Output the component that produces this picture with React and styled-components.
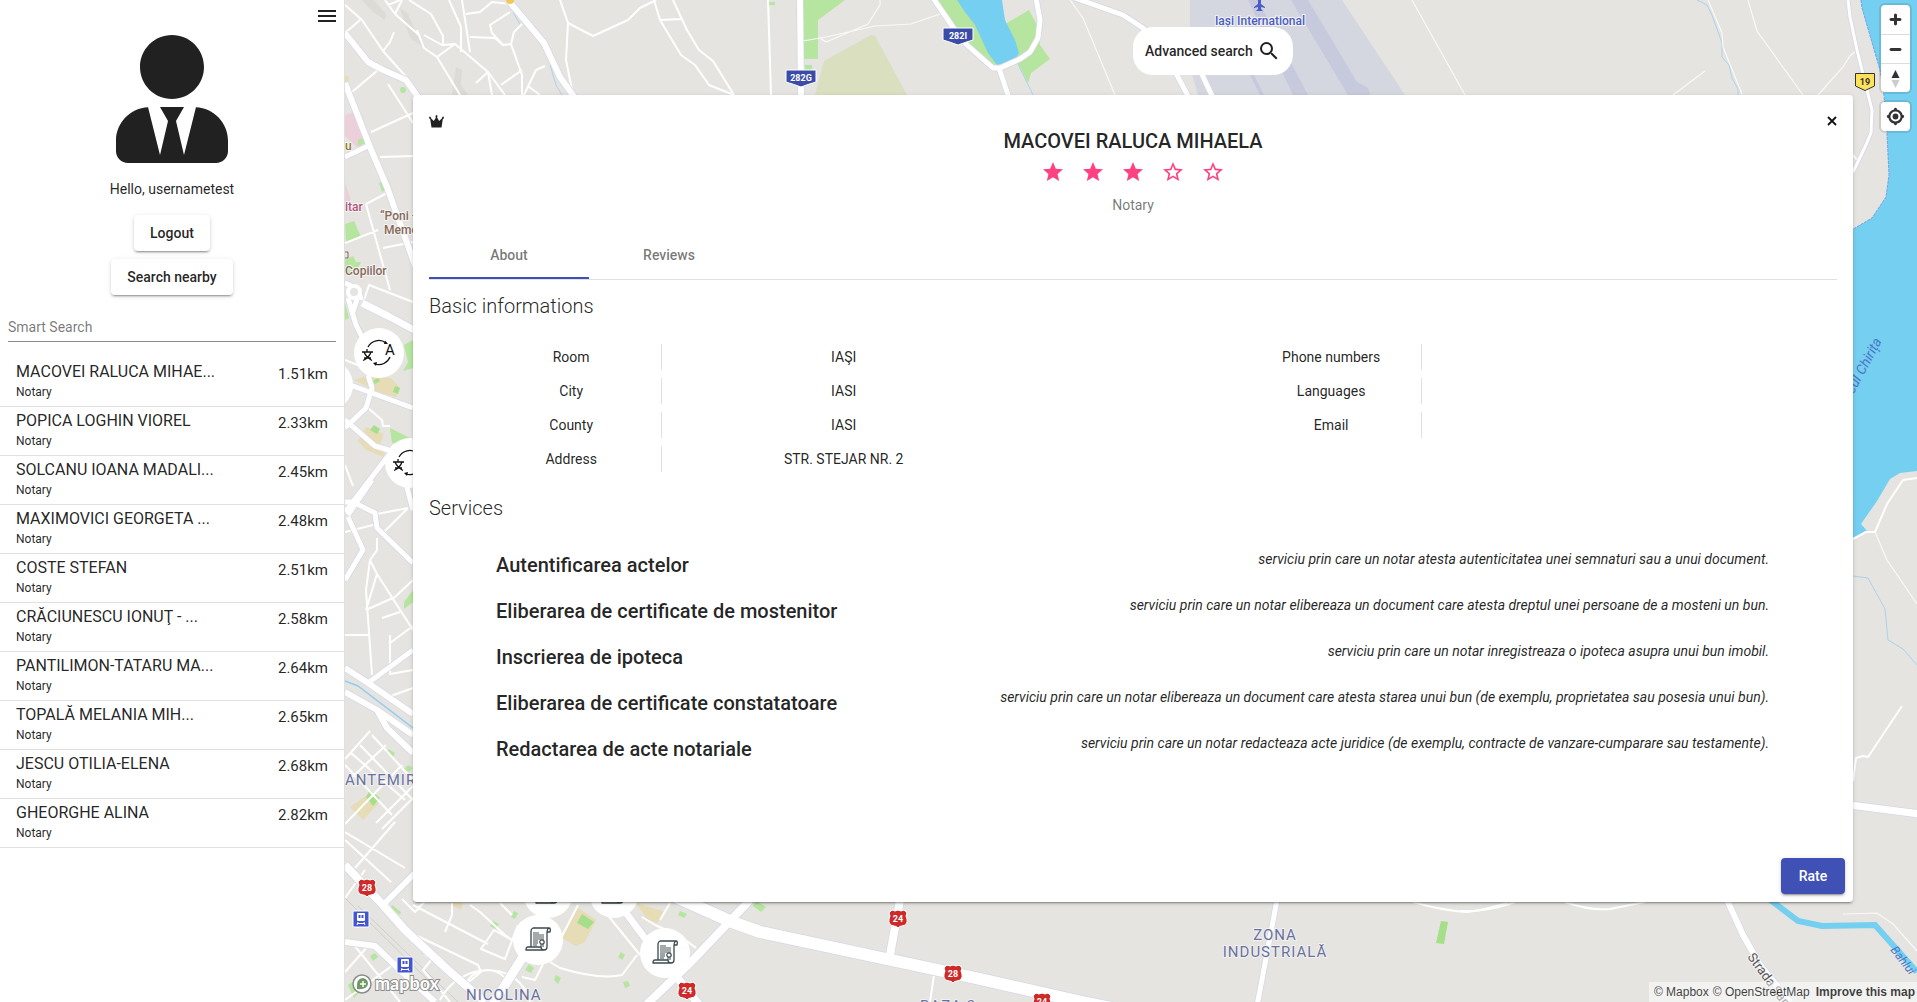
import React, { useState } from "react";
import styled, { createGlobalStyle, css } from "styled-components";
import { FaUserTie } from "react-icons/fa";
import { MdMenu, MdSearch, MdStar, MdStarBorder } from "react-icons/md";

const GlobalStyle = createGlobalStyle`
  *, *::before, *::after { box-sizing: border-box; }
  body {
    margin: 0;
    background: #fff;
    color: rgba(0, 0, 0, 0.87);
    font-family: Roboto, "Liberation Sans", sans-serif;
    font-size: 14px;
    line-height: 20px;
  }
  button, input { font: inherit; color: inherit; }
  h1, h2, h3, p, dl, dd, ul { margin: 0; padding: 0; }
`;

/* ---------- shell ---------- */

const Shell = styled.div`
  display: grid;
  grid-template-columns: 345px minmax(0, 1fr);
  height: 100vh;
  overflow: hidden;
`;

const Sidebar = styled.aside`
  display: flex;
  flex-direction: column;
  align-items: center;
  overflow: hidden;
  border-right: 1px solid #e0e0e0;
`;

const IconButton = styled.button`
  display: flex;
  align-items: center;
  justify-content: center;
  width: ${(p) => p.$width || 24}px;
  height: 24px;
  padding: 0;
  border: 0;
  background: none;
  color: ${(p) => p.$color || "inherit"};
  font-size: 24px;
  cursor: pointer;
`;

const SidebarTop = styled.div`
  align-self: stretch;
  display: flex;
  justify-content: flex-end;
  padding: 4px 5px 7px;
`;

const Avatar = styled(FaUserTie)`
  font-size: 128px;
  width: 112px;
  height: 128px;
  flex: none;
`;

const Greeting = styled.p`
  margin: 16px 0;
`;

const raised = css`
  box-shadow: 0 3px 1px -2px rgba(0, 0, 0, 0.2), 0 2px 2px 0 rgba(0, 0, 0, 0.14),
    0 1px 5px 0 rgba(0, 0, 0, 0.12);
`;

const Button = styled.button`
  min-width: 64px;
  height: 36px;
  padding: 0 16px;
  border: 0;
  border-radius: 4px;
  background: ${(p) => (p.$primary ? "#3f51b5" : "#fff")};
  color: ${(p) => (p.$primary ? "#fff" : "inherit")};
  font-weight: 500;
  cursor: pointer;
  ${raised}
`;

const ButtonStack = styled.div`
  display: flex;
  flex-direction: column;
  align-items: center;
  gap: 8px;
`;

const SearchField = styled.label`
  align-self: stretch;
  display: block;
  margin: 22px 8px 16px;
  border-bottom: 1px solid #8c8c8c;
`;

const SearchInput = styled.input`
  display: block;
  width: 100%;
  height: 24px;
  padding: 0 0 4px;
  border: 0;
  outline: 0;
  background: none;
  &::placeholder { color: rgba(0, 0, 0, 0.54); opacity: 1; }
`;

const ResultList = styled.ul`
  align-self: stretch;
  list-style: none;
`;

const ResultRow = styled.li`
  display: flex;
  justify-content: space-between;
  padding: 2px 16px 6px;
  border-bottom: 1px solid #e0e0e0;
`;

const ResultName = styled.div`
  font-size: 16px;
  line-height: 24px;
`;

const ResultKind = styled.div`
  font-size: 12px;
  line-height: 16px;
`;

const Distance = styled.div`
  font-size: 15px;
  line-height: 28px;
`;

/* ---------- map ---------- */

const MapArea = styled.main`
  position: relative;
  overflow: hidden;
  background: #e5e4e0;
`;

const MapCanvas = styled.svg`
  position: absolute;
  inset: 0;
  width: 100%;
  height: 100%;
  font-family: Roboto, sans-serif;
`;

const Stage = styled.div`
  position: relative;
  display: flex;
  flex-direction: column;
  height: 100vh;
  padding: 27px 64px 100px 68px;
`;

const AdvancedSearch = styled.button`
  align-self: flex-start;
  margin-left: 50%;
  display: flex;
  align-items: center;
  gap: 4px;
  height: 48px;
  padding: 0 12px;
  border: 0;
  border-radius: 20px;
  background: #fff;
  font-weight: 500;
  cursor: pointer;
  svg { font-size: 24px; }
`;

const Controls = styled.div`
  position: absolute;
  top: 5px;
  right: 7px;
  display: flex;
  flex-direction: column;
  gap: 10px;
`;

const ControlGroup = styled.div`
  border-radius: 4px;
  background: #fff;
  overflow: hidden;
  box-shadow: 0 0 0 2px rgba(0, 0, 0, 0.1);
`;

const ControlButton = styled.button`
  display: block;
  width: 29px;
  height: 29px;
  padding: 0;
  border: 0;
  background: none;
  cursor: pointer;
  & + & { border-top: 1px solid #ddd; }
  svg { display: block; width: 29px; height: 29px; }
`;

const Attribution = styled.div`
  position: absolute;
  right: 0;
  bottom: 0;
  display: flex;
  gap: 4px;
  padding: 0 2px 0 5px;
  background: rgba(255, 255, 255, 0.5);
  font-family: "Liberation Sans", Arial, sans-serif;
  font-size: 12px;
  white-space: nowrap;
  a { color: rgba(0, 0, 0, 0.75); text-decoration: none; }
  a:last-child { font-weight: 700; margin-left: 2px; }
`;

/* ---------- panel ---------- */

const Panel = styled.section`
  flex: 1;
  display: flex;
  flex-direction: column;
  margin-top: 20px;
  border-radius: 4px;
  background: #fff;
  ${raised}
`;

const PanelHeader = styled.header`
  display: grid;
  grid-template-columns: 24px 1fr 24px;
  padding: 14px 16px 16px;
`;

const HeaderCenter = styled.div`
  display: flex;
  flex-direction: column;
  align-items: center;
  padding-top: 16px;
`;

const Title = styled.h1`
  font-size: 20px;
  font-weight: 500;
  line-height: 32px;
`;

const Stars = styled.div`
  display: flex;
  padding: 3px 0 11px;
`;

const Subtitle = styled.p`
  color: rgba(0, 0, 0, 0.54);
`;

const TabBar = styled.div`
  display: flex;
  margin: 0 16px;
  border-bottom: 1px solid #e0e0e0;
`;

const Tab = styled.button`
  width: 160px;
  height: 48px;
  padding: 2px 0 0;
  border: 0;
  border-bottom: 2px solid ${(p) => (p.$active ? "#3f51b5" : "transparent")};
  background: none;
  color: rgba(0, 0, 0, 0.54);
  font-weight: 500;
  cursor: pointer;
`;

const PanelBody = styled.div`
  padding: 10px 16px 0;
`;

const SectionTitle = styled.h2`
  font-size: 20px;
  font-weight: 300;
  line-height: 32px;
`;

const FactColumns = styled.div`
  display: grid;
  grid-template-columns: 1fr 1fr;
  column-gap: 216px;
  padding: 22px 52px 20px;
`;

const FactList = styled.dl`
  display: flex;
  flex-direction: column;
  gap: 8px;
`;

const Fact = styled.div`
  display: grid;
  grid-template-columns: 1fr 2fr;
  line-height: 26px;
  text-align: center;
  dt { border-right: 1px solid #e0e0e0; }
`;

const ServiceList = styled.div`
  display: flex;
  flex-direction: column;
  gap: 14px;
  padding: 25px 68px 24px 67px;
`;

const Service = styled.div`
  display: flex;
  justify-content: space-between;
  align-items: flex-start;
  h3 { font-size: 20px; font-weight: 500; line-height: 32px; }
  p { font-style: italic; text-align: right; }
`;

const PanelFooter = styled.footer`
  display: flex;
  justify-content: flex-end;
  margin-top: auto;
  padding: 8px;
`;

/* ---------- data ---------- */

const results = [
  ["MACOVEI RALUCA MIHAE...", "1.51km"],
  ["POPICA LOGHIN VIOREL", "2.33km"],
  ["SOLCANU IOANA MADALI...", "2.45km"],
  ["MAXIMOVICI GEORGETA ...", "2.48km"],
  ["COSTE STEFAN", "2.51km"],
  ["CRĂCIUNESCU IONUŢ - ...", "2.58km"],
  ["PANTILIMON-TATARU MA...", "2.64km"],
  ["TOPALĂ MELANIA MIH...", "2.65km"],
  ["JESCU OTILIA-ELENA", "2.68km"],
  ["GHEORGHE ALINA", "2.82km"],
];

const facts = [
  [["Room", "IAŞI"], ["City", "IASI"], ["County", "IASI"], ["Address", "STR. STEJAR NR. 2"]],
  [["Phone numbers", ""], ["Languages", ""], ["Email", ""]],
];

const services = [
  ["Autentificarea actelor", "serviciu prin care un notar atesta autenticitatea unei semnaturi sau a unui document."],
  ["Eliberarea de certificate de mostenitor", "serviciu prin care un notar elibereaza un document care atesta dreptul unei persoane de a mosteni un bun."],
  ["Inscrierea de ipoteca", "serviciu prin care un notar inregistreaza o ipoteca asupra unui bun imobil."],
  ["Eliberarea de certificate constatatoare", "serviciu prin care un notar elibereaza un document care atesta starea unui bun (de exemplu, proprietatea sau posesia unui bun)."],
  ["Redactarea de acte notariale", "serviciu prin care un notar redacteaza acte juridice (de exemplu, contracte de vanzare-cumparare sau testamente)."],
];

/* Map features: polygons as [fill, points], roads as [width, points]. */
const areas = [
  ["#b5e59f", "801,0 845,0 818,20 818,59 803,59"],
  ["#b5e59f", "805,65 812,65 812,70 805,70"],
  ["#b5e59f", "769,2 775,2 775,5 769,5"],
  ["#d9dfbf", "815,95 824,61 871,35 875,36 907,95"],
  ["#b5e59f", "936,0 962,0 975,25 997,65 988,64 960,35"],
  ["#b5e59f", "1007,23 1029,10 1038,27 1040,45 1050,59 1031,73 1028,83 1018,63 1010,60"],
  ["#75cff0", "957,0 1002,0 1005,20 1015,40 1019,53 1013,62 997,65 988,53 975,25 965,12"],
  ["#d5d7e0", "1190,0 1342,0 1405,95 1198,95 1190,67"],
  ["#c7c9dd", "1291,0 1308,0 1357,82 1368,88 1370,95 1348,95"],
  ["#c7c9dd", "1248,0 1258,0 1308,95 1293,95"],
  ["#c7c9dd", "1250,75 1254,75 1264,95 1260,95"],
  ["#75cff0", "1861,0 1862,8 1880,70 1884,95 1887,133 1889,175 1886,197 1872,218 1850,231 1840,545 1867,531 1861,524 1877,501 1890,479 1900,473 1917,471 1917,0"],
  ["#dcdbd6", "362,0 374,0 386,14 385,20 373,12"],
  ["#dcdbd6", "400,8 408,14 422,46 410,38"],
  ["#dcdbd6", "456,67 462,70 461,85 468,95 452,95"],
  ["#ebd0da", "345,115 354,112 366,140 358,148 345,136"],
  ["#ebd0da", "345,182 351,200 345,203"],
  ["#b5e59f", "358,140 364,138 366,143 358,146"],
  ["#b5e59f", "345,224 354,221 361,237 346,243"],
  ["#b5e59f", "379,183 384,181 387,189 382,192"],
  ["#b5e59f", "345,260 353,256 356,262 361,262 357,270 345,275"],
  ["#b5e59f", "345,303 349,318 345,320"],
  ["#b5e59f", "404,345 413,340 413,368 403,371 408,362"],
  ["#e6dcb5", "345,75 349,77 348,82 345,82"],
  ["#e6dcb5", "354,380 366,376 391,378 400,388 396,397 378,392"],
  ["#a5df8a", "373,381 378,378 380,381 375,384"],
  ["#a5df8a", "395,386 400,388 398,394 393,392"],
  ["#e6dcb5", "358,441 366,427 384,434 380,444 386,458 366,450"],
  ["#a5df8a", "374,425 380,429 377,434 370,430"],
  ["#b5e59f", "390,428 410,438 410,443 392,443"],
  ["#b5e59f", "413,590 404,602 404,609 413,602"],
  ["#b5e59f", "388,749 395,753 393,757 386,753"],
  ["#b5e59f", "408,765 413,768 409,772 404,769"],
  ["#e6dcb5", "350,807 370,793 380,802 363,820"],
  ["#a5df8a", "370,790 380,798 373,806 366,797"],
  ["#b5e59f", "392,905 401,912 400,915 391,908"],
  ["#e6dcb5", "448,903 463,903 461,910"],
  ["#b5e59f", "375,953 378,957 373,961 370,956"],
  ["#b5e59f", "348,985 355,980 361,990 354,998"],
  ["#b5e59f", "493,921 499,924 496,929 490,926"],
  ["#b5e59f", "514,911 518,913 515,919 511,917"],
  ["#e6dcb5", "578,908 596,920 585,942 576,946 562,938"],
  ["#a5df8a", "582,914 594,922 588,929 577,923"],
  ["#e6dcb5", "636,903 665,912 657,923 647,919"],
  ["#b5e59f", "680,911 687,914 684,918 678,915"],
  ["#b5e59f", "756,901 766,907 761,912 753,906"],
  ["#b5e59f", "529,964 534,968 531,973 525,970"],
  ["#b5e59f", "556,975 561,978 558,984 554,980"],
  ["#b5e59f", "621,952 625,955 622,960 618,957"],
  ["#b5e59f", "623,982 628,981 630,986 625,988"],
  ["#a5df8a", "1441,921 1448,922 1444,944 1436,943"],
];

const streams = [
  [1, "M1697 0L1707 5L1712 15L1722 43V57L1729 65L1732 78L1738 89V95"],
  [1, "M1853 576L1868 578L1885 609L1888 640L1903 649L1917 665"],
  [1, "M1016 60L1033 95"],
  [1, "M513 12L521 26M550 65L556 85L562 95"],
];

const lanes =
  "M345 5L362 20L383 51L408 79M383 51L390 42L394 32M345 33L360 20M385 0L395 14L420 36M395 14L402 0" +
  "M417 30L424 48L437 57L460 95M388 5L400 0M437 57L455 44L442 45L424 35M409 0L431 14L443 36V45L455 44" +
  "M462 0L470 52M455 44L488 72L505 95M437 57L455 44M449 0L461 27V52M470 37L495 38L503 45L511 44L522 75V95" +
  "M466 14L480 12L492 2L510 4M510 12L490 25L492 33L503 45M511 44L514 32L522 24M501 85L522 70M524 95L536 70L545 66" +
  "M528 86L540 95M476 83L488 72L492 95M388 84L413 123M371 132L413 113M380 157L413 156M366 204L387 193" +
  "M366 204L390 290M383 248L413 242M345 243L378 230M352 92L378 70M364 300L369 285L413 302M372 330L380 345" +
  "M560 0L568 23L566 60L573 95M568 23L593 36L628 20L640 8L656 0M654 0L660 20L681 55L695 65L709 85L734 95" +
  "M673 0L687 30L699 50L713 61L734 95M660 20L682 19M768 0L771 95" +
  "M345 360L360 366M368 408L382 420L383 426L390 426M345 465L353 486M377 514L408 508M408 508L383 533M345 532L377 524" +
  "M377 538V550L370 560L366 590L372 675M366 610L377 574L370 560M377 574L413 630M366 610L395 597L413 580M345 635H368" +
  "M390 635V674L413 670M390 643L413 626M382 618L400 612M391 696L413 688" +
  "M345 759L370 731M345 784L386 745M345 765L392 815M350 752L405 800M360 745L413 800M372 735L413 780M345 824L402 765" +
  "M376 823L413 786M382 829L413 798M345 832L405 868M355 868L395 822M345 840L391 882" +
  "M345 898L365 870M413 870L435 888M402 899L415 912L425 901M413 905L488 944M452 903V915L445 932" +
  "M470 905L480 912L505 935L512 940L494 930L481 949L505 959L518 925M500 903L512 915M345 972L368 946M350 940L400 1002" +
  "M345 1000L400 960M425 955L432 959L423 970L450 1002M405 930L478 965L481 972L465 985M465 985C475 965 500 965 510 985" +
  "M440 1000C460 960 520 960 530 1002M550 962L560 968Q600 980 622 975L637 955M606 913L640 955" +
  "M544 962L535 980L522 977M560 940L578 905M642 917L655 925Q680 935 696 948M660 920L670 903M934 975L930 1002" +
  "M1413 902Q1440 910 1466 912Q1480 911 1507 903M1460 911L1475 911Q1500 908 1515 902M1565 902Q1590 911 1610 909L1645 902" +
  "M1853 781L1856 758L1863 756L1868 757L1902 706M1853 539L1866 532L1875 532L1887 504L1903 480L1917 478M1853 155L1857 160";

const hairlines =
  "M803 41L826 37L875 26L911 24L940 14M732 0M1070 0L1083 18L1115 95M1412 0L1465 95M1708 0L1722 33L1723 47L1742 94" +
  "M1748 0L1757 31L1803 95M1673 95L1705 71M1818 95L1843 67L1850 56L1857 50M868 24L880 5V0M820 38L826 42L868 24" +
  "M1843 914L1877 913L1893 924L1917 951M1875 532L1887 560L1917 604";

const roads = [
  [6, "M345 33L368 62L383 70L406 80L418 97"],
  [6, "M345 83L370 147L387 187L416 268"],
  [5, "M345 157L370 145"],
  [5, "M345 283Q360 288 361 300M348 298L356 325L366 345M358 296L353 312"],
  [7, "M362 303L388 316L416 331"],
  [5, "M345 383L413 408"],
  [5, "M368 375L372 388L366 408L345 428"],
  [5, "M345 420L375 446L395 452"],
  [5, "M388 456L345 512"],
  [5, "M405 480L413 510"],
  [5, "M348 515L372 480"],
  [5, "M345 502H353L375 513L377 528L413 563"],
  [5, "M348 517L363 550L345 580"],
  [6, "M345 668L368 683L413 714"],
  [5, "M368 683L413 650"],
  [6, "M345 692L377 710L387 728L413 753M377 710L413 735"],
  [8, "M345 865L383 905L405 930L448 970L485 1002"],
  [6, "M383 905L416 872"],
  [6, "M345 942L375 946L400 970L435 1002"],
  [9, "M524 955L492 1006"],
  [7, "M620 905L650 945"],
  [8, "M675 975L700 1006"],
  [8, "M750 900L691 962L645 1006"],
  [12, "M665 892L732 922L760 932L891 960L980 979L1082 1002L1131 1012"],
  [8, "M900 900L890 955"],
  [5, "M1277 900L1257 1006"],
  [6, "M508 0L544 43L560 77L575 98"],
  [6, "M800 -2L801 95"],
  [5, "M933 -2L955 30L967 45L993 68H1000L1020 59L1030 52L1038 38L1040 20L1036 -2M999 68L1009 98"],
  [5, "M1075 -2L1123 15L1143 28L1177 75L1189 98M1200 70L1213 98"],
  [3, "M1848 0L1850 17L1857 50L1862 70L1872 110L1871 133L1865 147L1853 172"],
  [7, "M1850 805L1920 814"],
  [6, "M1727 900L1743 935L1760 965L1790 1002"],
];

const shields = [
  ["28", 367, 888],
  ["24", 898, 919],
  ["28", 953, 974],
  ["24", 687, 991],
  ["24", 1042, 1002],
];

/* ---------- map drawing ---------- */

const RedShield = ({ x, y, label }) => (
  <g transform={`translate(${x} ${y})`}>
    <path
      d="M-6 -9Q-3 -7 0 -9Q3 -7 6 -9L9 -6Q7 -3 9 0Q10 6 4 7Q1 7 0 9Q-1 7 -4 7Q-10 6 -9 0Q-7 -3 -9 -6Z"
      fill="#cf2a2a" stroke="#fff" strokeWidth="1"
    />
    <text y="3" textAnchor="middle" fontSize="9" fontWeight="700" fill="#fff">{label}</text>
  </g>
);

const BlueShield = ({ x, y, label }) => (
  <g transform={`translate(${x} ${y})`}>
    <path d="M-15 -8H15V4Q8 6 0 9Q-8 6 -15 4Z" fill="#3b4ca8" stroke="#fff" />
    <text y="3" textAnchor="middle" fontSize="9" fontWeight="700" fill="#fff">{label}</text>
  </g>
);

const Station = ({ x, y }) => (
  <g transform={`translate(${x} ${y})`}>
    <rect x="-8" y="-8" width="16" height="16" rx="1" fill="#4257cd" stroke="#fff" />
    <rect x="-4" y="-6" width="8" height="8" rx="1" fill="#fff" />
    <path d="M-2.5 -4H-.5V-1H-2.5ZM.5 -4H2.5V-1H.5Z" fill="#4257cd" />
    <path d="M-3 3L-4 6M3 3L4 6M-3 4.500H3" stroke="#fff" />
  </g>
);

const TranslatorPin = ({ x, y }) => (
  <g transform={`translate(${x} ${y})`}>
    <circle r="25" fill="#fff" />
    <path d="M-11 -6A12 12 0 0 1 7 -10" fill="none" stroke="#111" strokeWidth="1.300" />
    <path d="M6 -12.500L9 -9L5 -9Z" fill="#111" />
    <path d="M11 4A12 12 0 0 1 -4 11" fill="none" stroke="#111" strokeWidth="1.300" />
    <path d="M-2 9L-6 10L-3 13Z" fill="#111" />
    <path d="M-17 -1H-6M-12 -4V-1M-15 -1Q-13 4 -7 7.500M-8 -1Q-10 5 -16 7.500M-15 5H-8" fill="none" stroke="#111" strokeWidth="1.300" />
    <text x="11" y="2" textAnchor="middle" fontSize="15" fill="#111">A</text>
  </g>
);

const NotaryPin = ({ x, y }) => (
  <g transform={`translate(${x} ${y})`}>
    <circle r="25" fill="#fff" />
    <g fill="none" stroke="#3b4a4c" strokeWidth="1.300" strokeLinejoin="round">
      <path d="M-7 7V-9Q-7 -11 -5 -12H11Q13 -12 12 -8H9Q9 -11 11 -12M9 -8V7Q9 10 6 10H-12Q-12 7 -10 7H3Q3 10 6 10" />
    </g>
    <path d="M-5 -7H1M-5 -5H6M-5 -3H6M-5 -1H6" stroke="#888f90" strokeWidth="1.300" />
    <path d="M-5 1H0M-5 3H0M-5 5H-1" stroke="#3b4a4c" />
    <circle cx="4" cy="2" r="2.200" fill="#fff" stroke="#3b4a4c" strokeWidth="1.200" />
    <path d="M3 4V7M5 4V7" stroke="#3b4a4c" />
  </g>
);

const district = {
  fill: "#6a71a0",
  stroke: "#f2f1f0",
  strokeWidth: 2,
  paintOrder: "stroke",
  fontSize: 15,
  letterSpacing: 1,
};

const halo = { stroke: "#f4f3f1", strokeWidth: 2, paintOrder: "stroke" };

function CityMap() {
  return (
    <MapCanvas viewBox="345 0 1572 1002" preserveAspectRatio="xMinYMin slice" aria-hidden="true">
      {areas.map(([fill, points]) => (
        <polygon key={points} points={points} fill={fill} />
      ))}
      <path
        d="M1861 0L1862 8L1880 70L1884 95L1887 133L1889 175L1886 197L1872 218L1850 231"
        fill="none" stroke="#6aa5ee" strokeDasharray="3 1"
      />
      {streams.map(([w, d]) => (
        <path key={d} d={d} fill="none" stroke="#a9d3ee" strokeWidth={w} />
      ))}
      <path d="M345 681L358 686L413 728" fill="none" stroke="#8fcdf3" strokeWidth="1.500" />
      <path d="M1768 898L1798 921L1822 926L1875 925L1917 972" fill="none" stroke="#75cff0" strokeWidth="6" />
      <path d="M345 898L450 1002M358 906L458 1002" fill="none" stroke="#cfcec9" />
      <path d={lanes} fill="none" stroke="#fff" strokeWidth="2" strokeLinejoin="round" />
      <path d={hairlines} fill="none" stroke="#f9f9f7" strokeWidth="1.200" />
      {roads.map(([w, d]) => (
        <path key={d} d={d} fill="none" stroke="#d6d7e8" strokeWidth={w + 1.5} strokeLinejoin="round" />
      ))}
      {roads.map(([w, d]) => (
        <path key={d} d={d} fill="none" stroke="#fff" strokeWidth={w} strokeLinejoin="round" />
      ))}
      <circle cx="354" cy="292" r="6" fill="#e5e4e0" stroke="#fff" strokeWidth="4" />
      <circle cx="403" cy="90" r="3" fill="#b5e59f" />
      <circle cx="510" cy="0" r="4" fill="#f3c955" />

      <g fontSize="12" fontWeight="500" {...halo}>
        <text x="345" y="150" fill="#8f7a35">u</text>
        <text x="345" y="211" fill="#b0557c">itar</text>
        <text x="380" y="220" fill="#856a5c">“Poni -</text>
        <text x="384" y="234" fill="#856a5c">Memo</text>
        <text x="345" y="275" fill="#856a5c">Copiilor</text>
        <text x="1260" y="25" textAnchor="middle" fill="#4a5cc5">Iași International</text>
      </g>
      <path d="M345 252H348V258H345" fill="none" stroke="#856a5c" />
      <path d="M1259 -2L1261 0V4L1265 7V8L1261 7V9L1263 11H1256L1258 9V7L1254 8V7L1258 4V0Z" fill="#4a5cc5" />

      <text x="345" y="785" {...district}>ANTEMIR</text>
      <text x="466" y="1000" {...district}>NICOLINA</text>
      <text x="1275" y="940" textAnchor="middle" {...district}>ZONA</text>
      <text x="1275" y="957" textAnchor="middle" {...district}>INDUSTRIALĂ</text>
      <text x="920" y="1011" {...district}>BAZA 3</text>

      <text transform="translate(1882 341) rotate(-62)" textAnchor="end" fontSize="14" fontStyle="italic" fill="#4a78c8">Lacul Chirița</text>
      <text transform="translate(1890 950) rotate(52)" fontSize="12" fontStyle="italic" fill="#4a78c8">Bahlui</text>
      <text transform="translate(1747 957) rotate(54)" fontSize="13" fill="#555" {...halo}>Strada San</text>

      <BlueShield x={801} y={78} label="282G" />
      <BlueShield x={958} y={36} label="282I" />
      <path d="M1855.500 73.500H1874.500V86L1865 90.500L1855.500 86Z" fill="#fde25a" stroke="#333" />
      <text x="1865" y="85" textAnchor="middle" fontSize="9" fontWeight="700" fill="#333">19</text>
      {shields.map(([label, x, y]) => (
        <RedShield key={label + x} label={label} x={x} y={y} />
      ))}
      <Station x={361} y={919} />
      <Station x={405} y={965} />

      <circle cx="328" cy="385" r="25" fill="#fff" />
      <TranslatorPin x={379} y={353} />
      <TranslatorPin x={410} y={463} />
      <NotaryPin x={548} y={893} />
      <NotaryPin x={614} y={893} />
      <NotaryPin x={538} y={940} />
      <NotaryPin x={665} y={953} />

      <circle cx="362" cy="984" r="9" fill="#fff" fillOpacity="0.900" stroke="#8c8c8c" strokeWidth="1.500" />
      <path d="M357 989Q356 978 363 978Q368 979 368 984Q367 990 357 989Z" fill="#6f9a67" />
      <path d="M363 981V987M360 984H366" stroke="#fff" strokeWidth="1.500" />
      <text x="375" y="990" fontFamily="Lato, sans-serif" fontSize="18" fontWeight="700" fill="#fff" stroke="#8c8c8c" strokeWidth="2" paintOrder="stroke">mapbox</text>
    </MapCanvas>
  );
}

/* ---------- icons ---------- */

const CrownIcon = () => (
  <svg width="15" height="13" viewBox="0 0 15 13" aria-hidden="true">
    <path
      d="M2.500 12.500L1.200 4L0 3.200L.4 1.600L1.800 2L2 3.300L4.800 6L6.800 2.800L6.500 .8L7.500 0L8.500 .8L8.200 2.800L10.200 6L13 3.300L13.200 2L14.600 1.600L15 3.200L13.800 4L12.500 12.500Z"
      fill="currentColor"
    />
  </svg>
);

const CloseIcon = () => (
  <svg width="10" height="10" viewBox="0 0 10 10" aria-hidden="true">
    <path d="M1 1L9 9M9 1L1 9" stroke="#111" strokeWidth="1.800" />
  </svg>
);

const HeaderCorner = styled.div`
  display: flex;
  justify-content: ${(p) => p.$side};
  svg { flex: none; }
  button { justify-content: ${(p) => p.$side}; }
`;

const controlIcons = {
  "Zoom in": <path d="M14.500 8.500c-.75 0-1.500.75-1.500 1.500v3h-3c-.75 0-1.500.75-1.500 1.500S9.250 16 10 16h3v3c0 .75.75 1.500 1.500 1.500S16 19.750 16 19v-3h3c.75 0 1.500-.75 1.500-1.500S19.750 13 19 13h-3v-3c0-.75-.75-1.500-1.500-1.500z" />,
  "Zoom out": <path d="M10 13c-.75 0-1.500.75-1.500 1.500S9.250 16 10 16h9c.75 0 1.500-.75 1.500-1.500S19.750 13 19 13h-9z" />,
  "Reset bearing": (
    <>
      <path d="M10.500 14l4-8 4 8h-8z" />
      <path d="M10.500 16l4 8 4-8h-8z" fill="#ccc" />
    </>
  ),
};

export default function App() {
  const [query, setQuery] = useState("");
  const [tab, setTab] = useState("About");
  const [rating, setRating] = useState(3);

  return (
    <>
      <GlobalStyle />
      <Shell>
        <Sidebar>
          <SidebarTop>
            <IconButton aria-label="Toggle menu"><MdMenu /></IconButton>
          </SidebarTop>
          <Avatar aria-hidden="true" />
          <Greeting>Hello, usernametest</Greeting>
          <ButtonStack>
            <Button>Logout</Button>
            <Button>Search nearby</Button>
          </ButtonStack>
          <SearchField>
            <SearchInput
              aria-label="Smart Search"
              placeholder="Smart Search"
              value={query}
              onChange={(e) => setQuery(e.target.value)}
            />
          </SearchField>
          <ResultList>
            {results.map(([name, distance]) => (
              <ResultRow key={name}>
                <div>
                  <ResultName>{name}</ResultName>
                  <ResultKind>Notary</ResultKind>
                </div>
                <Distance>{distance}</Distance>
              </ResultRow>
            ))}
          </ResultList>
        </Sidebar>

        <MapArea>
          <CityMap />
          <Stage>
            <AdvancedSearch>
              Advanced search
              <MdSearch />
            </AdvancedSearch>
            <Panel>
              <PanelHeader>
                <HeaderCorner $side="flex-start">
                  <IconButton aria-label="Premium"><CrownIcon /></IconButton>
                </HeaderCorner>
                <HeaderCenter>
                  <Title>MACOVEI RALUCA MIHAELA</Title>
                  <Stars>
                    {[1, 2, 3, 4, 5].map((n) => (
                      <IconButton
                        key={n}
                        $width={40}
                        $color="#ff4081"
                        aria-label={`${n} stars`}
                        onClick={() => setRating(n)}
                      >
                        {n <= rating ? <MdStar /> : <MdStarBorder />}
                      </IconButton>
                    ))}
                  </Stars>
                  <Subtitle>Notary</Subtitle>
                </HeaderCenter>
                <HeaderCorner $side="flex-end">
                  <IconButton aria-label="Close"><CloseIcon /></IconButton>
                </HeaderCorner>
              </PanelHeader>
              <TabBar role="tablist">
                {["About", "Reviews"].map((name) => (
                  <Tab
                    key={name}
                    role="tab"
                    aria-selected={tab === name}
                    $active={tab === name}
                    onClick={() => setTab(name)}
                  >
                    {name}
                  </Tab>
                ))}
              </TabBar>
              <PanelBody>
                <SectionTitle>Basic informations</SectionTitle>
                <FactColumns>
                  {facts.map((column, i) => (
                    <FactList key={i}>
                      {column.map(([term, value]) => (
                        <Fact key={term}>
                          <dt>{term}</dt>
                          <dd>{value}</dd>
                        </Fact>
                      ))}
                    </FactList>
                  ))}
                </FactColumns>
                <SectionTitle>Services</SectionTitle>
                <ServiceList>
                  {services.map(([name, description]) => (
                    <Service key={name}>
                      <h3>{name}</h3>
                      <p>{description}</p>
                    </Service>
                  ))}
                </ServiceList>
              </PanelBody>
              <PanelFooter>
                <Button $primary>Rate</Button>
              </PanelFooter>
            </Panel>
          </Stage>
          <Controls>
            <ControlGroup>
              {Object.entries(controlIcons).map(([label, icon]) => (
                <ControlButton key={label} aria-label={label}>
                  <svg viewBox="0 0 29 29" fill="#333">{icon}</svg>
                </ControlButton>
              ))}
            </ControlGroup>
            <ControlGroup>
              <ControlButton aria-label="Find my location">
                <svg viewBox="0 0 20 20" fill="#333">
                  <path d="M10 4C9 4 9 5 9 5v.1A5 5 0 0 0 5.100 9H5s-1 0-1 1 1 1 1 1h.1A5 5 0 0 0 9 14.900v.1s0 1 1 1 1-1 1-1v-.1a5 5 0 0 0 3.900-3.900h.1s1 0 1-1-1-1-1-1h-.1A5 5 0 0 0 11 5.100V5s0-1-1-1zm0 2.500a3.500 3.500 0 1 1 0 7 3.500 3.500 0 1 1 0-7z" />
                  <circle cx="10" cy="10" r="2" />
                </svg>
              </ControlButton>
            </ControlGroup>
          </Controls>
          <Attribution>
            <a href="#mapbox">© Mapbox</a>
            <a href="#osm">© OpenStreetMap</a>
            <a href="#improve">Improve this map</a>
          </Attribution>
        </MapArea>
      </Shell>
    </>
  );
}
